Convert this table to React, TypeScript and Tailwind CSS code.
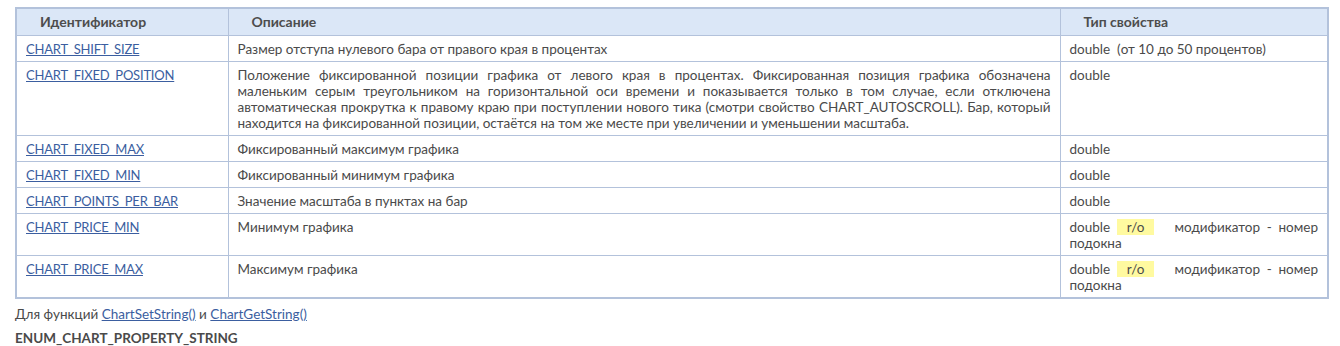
export default function App() {
  const rows = [
    {
      id: "CHART_SHIFT_SIZE",
      desc: "Размер отступа нулевого бара от правого края в процентах",
      type: <>double&nbsp; (от 10 до 50 процентов)</>,
    },
    {
      id: "CHART_FIXED_POSITION",
      desc: "Положение фиксированной позиции графика от левого края в процентах. Фиксированная позиция графика обозначена маленьким серым треугольником на горизонтальной оси времени и показывается только в том случае, если отключена автоматическая прокрутка к правому краю при поступлении нового тика (смотри свойство CHART_AUTOSCROLL). Бар, который находится на фиксированной позиции, остаётся на том же месте при увеличении и уменьшении масштаба.",
      type: "double",
    },
    { id: "CHART_FIXED_MAX", desc: "Фиксированный максимум графика", type: "double" },
    { id: "CHART_FIXED_MIN", desc: "Фиксированный минимум графика", type: "double" },
    { id: "CHART_POINTS_PER_BAR", desc: "Значение масштаба в пунктах на бар", type: "double" },
    { id: "CHART_PRICE_MIN", desc: "Минимум графика", type: "ro" },
    { id: "CHART_PRICE_MAX", desc: "Максимум графика", type: "ro" },
  ];

  return (
    <main className="min-h-screen bg-white pl-[15px] pt-[7px] font-['Lato',sans-serif] text-[13.5px] leading-4 text-[#4a4a4a]">

      <table className="w-[1314px] table-fixed border-collapse border-2 border-[#b3c2db]">

        <colgroup>
          <col className="w-[212px]" />
          <col className="w-[832px]" />
          <col />
        </colgroup>

        {/* Header */}

        <thead className="bg-[#dbe7f7]">
          <tr>
            <th className="h-[27px] border border-[#b3c2db] pl-[23px] text-left text-[14px] font-bold text-[#4d4d4d]">
              Идентификатор
            </th>
            <th className="border border-[#b3c2db] pl-[23px] text-left text-[14px] font-bold text-[#4d4d4d]">
              Описание
            </th>
            <th className="border border-[#b3c2db] pl-[23px] text-left text-[14px] font-bold text-[#4d4d4d]">
              Тип свойства
            </th>
          </tr>
        </thead>

        <tbody>
          {rows.map((r) => (
            <tr key={r.id}>
              <td className="border border-[#b3c2db] px-[9px] pt-[5px] pb-[4px] align-top">
                <a href="#" className="text-[13px] tracking-[-0.2px] text-[#3b5ea0] underline">
                  {r.id}
                </a>
              </td>
              <td className="border border-[#b3c2db] px-[9px] pt-[5px] pb-[4px] text-justify align-top">
                {r.desc}
              </td>
              <td className="border border-[#b3c2db] px-[9px] pt-[5px] pb-[4px] text-justify align-top">
                {r.type === "ro" ? (
                  <>
                    double <span className="inline-block bg-[#fffaa0] px-[10px]">r/o</span> &nbsp; модификатор - номер подокна
                  </>
                ) : (
                  r.type
                )}
              </td>
            </tr>
          ))}
        </tbody>

      </table>

      <p className="mt-[7px]">
        Для функций{" "}
        <a href="#" className="text-[#3b5ea0] underline">ChartSetString()</a>
        {" "}и{" "}
        <a href="#" className="text-[#3b5ea0] underline">ChartGetString()</a>
      </p>

      <p className="mt-[8px] font-bold">ENUM_CHART_PROPERTY_STRING</p>

    </main>
  );
}
